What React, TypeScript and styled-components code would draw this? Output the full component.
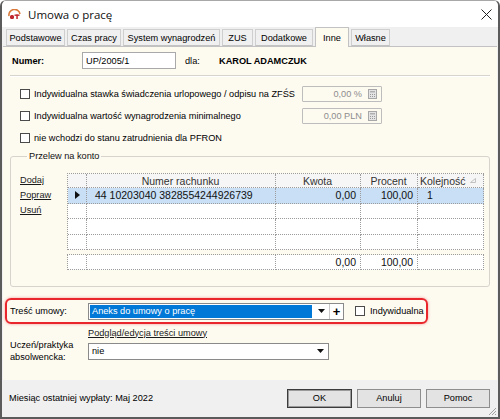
import styled, { createGlobalStyle } from 'styled-components';

const GlobalStyle = createGlobalStyle`
  html, body { margin: 0; padding: 0; background: #fff; }
  body { font-family: "Liberation Sans", Arial, sans-serif; font-size: 9.2px; color: #000; }
  * { box-sizing: border-box; }
`;

const Window = styled.div`
  position: relative;
  width: 500px;
  height: 419px;
  display: flex;
  flex-direction: column;
  background: #f0f0f0;
  border: 2px solid #5b5b5b;
  border-top: 1px solid #a8a8a8;
  border-radius: 6px 6px 0 0;
  overflow: hidden;
`;

const TitleBar = styled.div`
  height: 26px;
  flex-shrink: 0;
  display: flex;
  align-items: center;
  padding-left: 6px;
  background: #fff;
`;

const TitleText = styled.span`
  margin-left: 7px;
  font-family: "Open Sans", "Noto Sans", sans-serif;
  font-size: 11.5px;
  color: #111;
`;

const CloseButton = styled.div`
  margin-left: auto;
  width: 24px;
  height: 26px;
  display: flex;
  align-items: center;
  justify-content: center;
`;

const TabStrip = styled.div`
  height: 19px;
  flex-shrink: 0;
  display: flex;
  align-items: flex-end;
  gap: 2px;
  padding-left: 3px;
  margin: 0 1px;
  position: relative;
  z-index: 1;
`;

const Tab = styled.div<{ $w: number; $active?: boolean }>`
  width: ${(p) => p.$w}px;
  height: ${(p) => (p.$active ? 20 : 17)}px;
  margin-bottom: ${(p) => (p.$active ? -1 : 0)}px;
  display: flex;
  align-items: center;
  justify-content: center;
  border: 1px solid ${(p) => (p.$active ? '#c2c2c2' : '#cfcfcf')};
  border-bottom: ${(p) => (p.$active ? 'none' : '1px solid #c2c2c2')};
  background: ${(p) => (p.$active ? '#fdfaf0' : '#f0f0f0')};
  white-space: nowrap;
`;

const Panel = styled.div`
  height: 334px;
  flex-shrink: 0;
  margin: 0 1px;
  padding: 0 7px;
  display: flex;
  flex-direction: column;
  background: #fdfaf0;
  border-top: 1px solid #c2c2c2;
`;

const NumberRow = styled.div`
  margin-top: 5px;
  height: 17px;
  display: flex;
  align-items: center;
  padding-left: 2px;
`;

const BoldLabel = styled.span<{ $w?: number }>`
  font-weight: bold;
  ${(p) => (p.$w ? `width: ${p.$w}px;` : '')}
  flex-shrink: 0;
`;

const PlainLabel = styled.span<{ $w?: number; $ml?: number }>`
  ${(p) => (p.$w ? `width: ${p.$w}px;` : '')}
  margin-left: ${(p) => p.$ml ?? 0}px;
  flex-shrink: 0;
  white-space: nowrap;
`;

const TextInput = styled.div`
  width: 94px;
  height: 17px;
  display: flex;
  align-items: center;
  padding-left: 3px;
  background: #fff;
  border: 1px solid #a9a9a9;
`;

const Separator = styled.div`
  margin-top: 6px;
  height: 2px;
  border-top: 1px solid #d6d4cc;
  border-bottom: 1px solid #fff;
`;

const CheckList = styled.div`
  margin-top: 9px;
  display: flex;
  flex-direction: column;
  gap: 6px;
`;

const CheckRow = styled.div`
  height: 16px;
  display: flex;
  align-items: center;
  padding-left: 10px;
`;

const Box = styled.span`
  width: 10px;
  height: 10px;
  flex-shrink: 0;
  background: #fff;
  border: 1px solid #4a4a4a;
  margin-right: 4px;
`;

const ValueBox = styled.div`
  margin-left: auto;
  margin-right: 108px;
  width: 80px;
  height: 16px;
  display: flex;
  align-items: center;
  justify-content: flex-end;
  gap: 6px;
  padding-right: 4px;
  border: 1px solid #bdbdbd;
  border-radius: 1px;
  color: #8d8d8d;
`;

const Group = styled.fieldset`
  margin: 4px 0 0 0;
  padding: 11px 5px 16px 9px;
  min-inline-size: 0;
  border: 1px solid #d6d4cc;
  border-radius: 3px;
`;

const Legend = styled.legend`
  margin-left: 7px;
  padding: 0 2px;
  line-height: 12px;
  color: #111;
`;

const GroupBody = styled.div`
  display: flex;
`;

const LinkColumn = styled.div`
  width: 47px;
  flex-shrink: 0;
  display: flex;
  flex-direction: column;
`;

const ActionLink = styled.span`
  line-height: 15px;
  text-decoration: underline;
  color: #1a1a1a;
`;

const Tables = styled.div`
  display: flex;
  flex-direction: column;
  gap: 4px;
`;

const Grid = styled.div`
  display: grid;
  grid-template-columns: 19px 189px 85px 57px 66px;
  border-top: 1px dotted #9c9c9c;
  border-left: 1px dotted #9c9c9c;
  font-size: 10.5px;
`;

const Cell = styled.div<{ $h: number; $align?: 'left' | 'right' | 'center'; $bg?: string; $pl?: number }>`
  height: ${(p) => p.$h}px;
  display: flex;
  align-items: center;
  justify-content: ${(p) => (p.$align === 'right' ? 'flex-end' : p.$align === 'center' ? 'center' : 'flex-start')};
  padding: 0 4px 0 ${(p) => p.$pl ?? 3}px;
  background: ${(p) => p.$bg ?? '#fff'};
  border-right: 1px dotted #9c9c9c;
  border-bottom: 1px dotted #9c9c9c;
  white-space: nowrap;
  color: #111;
`;

const HeaderText = styled.span`
  color: #333;
`;

const HighlightBox = styled.div`
  margin: 11px 0 0 -5px;
  width: 423px;
  height: 26px;
  display: flex;
  align-items: center;
  padding-left: 3px;
  border: 2px solid #e8262b;
  border-radius: 6px;
  box-shadow: 0 0 3px rgba(232, 38, 43, 0.45);
`;

const Select = styled.div<{ $w: number }>`
  width: ${(p) => p.$w}px;
  height: 17px;
  flex-shrink: 0;
  display: flex;
  align-items: stretch;
  background: #fff;
  border: 1px solid #8a8a8a;
`;

const SelectValue = styled.div<{ $selected?: boolean }>`
  flex: 1;
  margin: 1px;
  display: flex;
  align-items: center;
  padding-left: 2px;
  background: ${(p) => (p.$selected ? '#0078d7' : 'transparent')};
  color: ${(p) => (p.$selected ? '#fff' : '#000')};
`;

const ArrowPart = styled.div`
  width: 16px;
  display: flex;
  align-items: center;
  justify-content: center;
`;

const PlusPart = styled.div`
  width: 14px;
  display: flex;
  align-items: center;
  justify-content: center;
  border-left: 1px solid #c8c8c8;
  font-size: 13px;
  font-weight: bold;
  line-height: 1;
`;

const SideCheck = styled.div`
  margin-left: 11px;
  display: flex;
  align-items: center;
`;

const LinkRow = styled.div`
  margin-top: 3px;
  height: 12px;
  display: flex;
  align-items: center;
  padding-left: 78px;
`;

const TraineeRow = styled.div`
  display: flex;
  align-items: center;
`;

const TwoLineLabel = styled.div`
  width: 78px;
  flex-shrink: 0;
  line-height: 12px;
`;

const Footer = styled.div`
  flex: 1;
  display: flex;
  align-items: center;
  padding: 0 8px 1px 7px;
`;

const Buttons = styled.div`
  margin-left: auto;
  display: flex;
  gap: 5px;
`;

const Button = styled.div<{ $default?: boolean }>`
  width: ${(p) => (p.$default ? 65 : 64)}px;
  height: 19px;
  display: flex;
  align-items: center;
  justify-content: center;
  background: #e3e3e3;
  border: 1px solid ${(p) => (p.$default ? '#3c3c3c' : '#8e8e8e')};
  box-shadow: ${(p) => (p.$default ? 'inset 0 0 0 1px #9a9a9a' : 'none')};
`;

const Grip = styled.svg`
  position: absolute;
  right: 1px;
  bottom: 1px;
`;

function Logo() {
  return (
    <svg width="13" height="11" viewBox="0 0 13 11">
      <path d="M1 7 A5.5 5.5 0 0 1 12 5" fill="none" stroke="#d97a3a" strokeWidth="1.6" />
      <rect x="2" y="6" width="4" height="4" rx="1.5" fill="#c0262d" />
      <rect x="6.5" y="5.5" width="5" height="1.4" fill="#c0262d" />
      <rect x="8.3" y="5.5" width="1.5" height="4.5" fill="#c0262d" />
    </svg>
  );
}

function CalcIcon() {
  return (
    <svg width="9" height="10" viewBox="0 0 9 10">
      <rect x="0.5" y="0.5" width="8" height="9" fill="#e4e4e4" stroke="#a8a8a8" />
      <rect x="2" y="2" width="5" height="1.5" fill="#b0b0b0" />
      {[0, 1].map((r) =>
        [0, 1, 2].map((c) => <rect key={`${r}-${c}`} x={2 + c * 2} y={5 + r * 2} width="1" height="1" fill="#9a9a9a" />),
      )}
    </svg>
  );
}

function DownArrow() {
  return (
    <svg width="7" height="4" viewBox="0 0 7 4">
      <path d="M0 0 H7 L3.5 4 Z" fill="#111" />
    </svg>
  );
}

const accounts = [
  { nr: '44 10203040 3828554244926739', kwota: '0,00', procent: '100,00', kolejnosc: '1' },
];

export default function App() {
  const tabs = [
    { label: 'Podstawowe', w: 59 },
    { label: 'Czas pracy', w: 54 },
    { label: 'System wynagrodzeń', w: 97 },
    { label: 'ZUS', w: 31 },
    { label: 'Dodatkowe', w: 58 },
    { label: 'Inne', w: 34, active: true },
    { label: 'Własne', w: 39 },
  ];
  const rowH = [15.5, 15.5, 15.5, 15.5];
  const rows = rowH.map((h, i) => accounts[i] ?? null);
  const selBg = '#c8dff5';

  return (
    <>
      <GlobalStyle />
      <Window>
        <TitleBar>
          <Logo />
          <TitleText>Umowa o pracę</TitleText>
          <CloseButton>
            <svg width="11" height="11" viewBox="0 0 11 11">
              <path d="M0.5 0.5 L10.5 10.5 M10.5 0.5 L0.5 10.5" stroke="#222" strokeWidth="1" />
            </svg>
          </CloseButton>
        </TitleBar>

        <TabStrip>
          {tabs.map((t) => (
            <Tab key={t.label} $w={t.w} $active={t.active}>
              {t.label}
            </Tab>
          ))}
        </TabStrip>

        <Panel>
          <NumberRow>
            <BoldLabel $w={70}>Numer:</BoldLabel>
            <TextInput>UP/2005/1</TextInput>
            <PlainLabel $w={34} $ml={9}>
              dla:
            </PlainLabel>
            <BoldLabel>KAROL ADAMCZUK</BoldLabel>
          </NumberRow>

          <Separator />

          <CheckList>
            <CheckRow>
              <Box />
              <PlainLabel>Indywidualna stawka świadczenia urlopowego / odpisu na ZFŚS</PlainLabel>
              <ValueBox>
                0,00 %
                <CalcIcon />
              </ValueBox>
            </CheckRow>
            <CheckRow>
              <Box />
              <PlainLabel>Indywidualna wartość wynagrodzenia minimalnego</PlainLabel>
              <ValueBox>
                0,00 PLN
                <CalcIcon />
              </ValueBox>
            </CheckRow>
            <CheckRow>
              <Box />
              <PlainLabel>nie wchodzi do stanu zatrudnienia dla PFRON</PlainLabel>
            </CheckRow>
          </CheckList>

          <Group>
            <Legend>Przelew na konto</Legend>
            <GroupBody>
              <LinkColumn>
                <ActionLink>Dodaj</ActionLink>
                <ActionLink>Popraw</ActionLink>
                <ActionLink>Usuń</ActionLink>
              </LinkColumn>
              <Tables>
                <Grid>
                  <Cell $h={14} $bg="#f6f6f6" />
                  <Cell $h={14} $bg="#f6f6f6" $align="center">
                    <HeaderText>Numer rachunku</HeaderText>
                  </Cell>
                  <Cell $h={14} $bg="#f6f6f6" $align="center">
                    <HeaderText>Kwota</HeaderText>
                  </Cell>
                  <Cell $h={14} $bg="#f6f6f6" $align="center">
                    <HeaderText>Procent</HeaderText>
                  </Cell>
                  <Cell $h={14} $bg="#f6f6f6" $pl={2}>
                    <HeaderText>Kolejność</HeaderText>
                    <svg width="6" height="5" viewBox="0 0 6 5" style={{ marginLeft: 4 }}>
                      <path d="M0.5 4.5 L5.5 4.5 L5.5 0.5 Z" fill="none" stroke="#b5b5b5" strokeWidth="0.8" />
                    </svg>
                  </Cell>
                  {rows.map((r, i) => {
                    const bg = r ? selBg : '#fff';
                    return [
                      <Cell key={`i${i}`} $h={rowH[i]} $bg={bg} $align="center" $pl={4}>
                        {r && (
                          <svg width="5" height="8" viewBox="0 0 5 8">
                            <path d="M0 0 L5 4 L0 8 Z" fill="#111" />
                          </svg>
                        )}
                      </Cell>,
                      <Cell key={`n${i}`} $h={rowH[i]} $bg={bg} $pl={8}>
                        {r?.nr}
                      </Cell>,
                      <Cell key={`k${i}`} $h={rowH[i]} $bg={bg} $align="right">
                        {r?.kwota}
                      </Cell>,
                      <Cell key={`p${i}`} $h={rowH[i]} $bg={bg} $align="right">
                        {r?.procent}
                      </Cell>,
                      <Cell key={`o${i}`} $h={rowH[i]} $bg={bg} $pl={9}>
                        {r?.kolejnosc}
                      </Cell>,
                    ];
                  })}
                </Grid>
                <Grid>
                  <Cell $h={15} />
                  <Cell $h={15} />
                  <Cell $h={15} $align="right">
                    0,00
                  </Cell>
                  <Cell $h={15} $align="right">
                    100,00
                  </Cell>
                  <Cell $h={15} />
                </Grid>
              </Tables>
            </GroupBody>
          </Group>

          <HighlightBox>
            <PlainLabel $w={78}>Treść umowy:</PlainLabel>
            <Select $w={256}>
              <SelectValue $selected>Aneks do umowy o pracę</SelectValue>
              <ArrowPart>
                <DownArrow />
              </ArrowPart>
              <PlusPart>+</PlusPart>
            </Select>
            <SideCheck>
              <Box />
              <PlainLabel $ml={1}>Indywidualna</PlainLabel>
            </SideCheck>
          </HighlightBox>

          <LinkRow>
            <ActionLink>Podgląd/edycja treści umowy</ActionLink>
          </LinkRow>

          <TraineeRow>
            <TwoLineLabel>
              Uczeń/praktyka
              <br />
              absolwencka:
            </TwoLineLabel>
            <Select $w={241}>
              <SelectValue>nie</SelectValue>
              <ArrowPart>
                <DownArrow />
              </ArrowPart>
            </Select>
          </TraineeRow>
        </Panel>

        <Footer>
          <span>Miesiąc ostatniej wypłaty: Maj 2022</span>
          <Buttons>
            <Button $default>OK</Button>
            <Button>Anuluj</Button>
            <Button>Pomoc</Button>
          </Buttons>
        </Footer>

        <Grip width="10" height="10" viewBox="0 0 10 10">
          <path d="M9 2 L2 9 M9 5 L5 9 M9 8 L8 9" stroke="#a0a0a0" strokeWidth="1" />
        </Grip>
      </Window>
    </>
  );
}
